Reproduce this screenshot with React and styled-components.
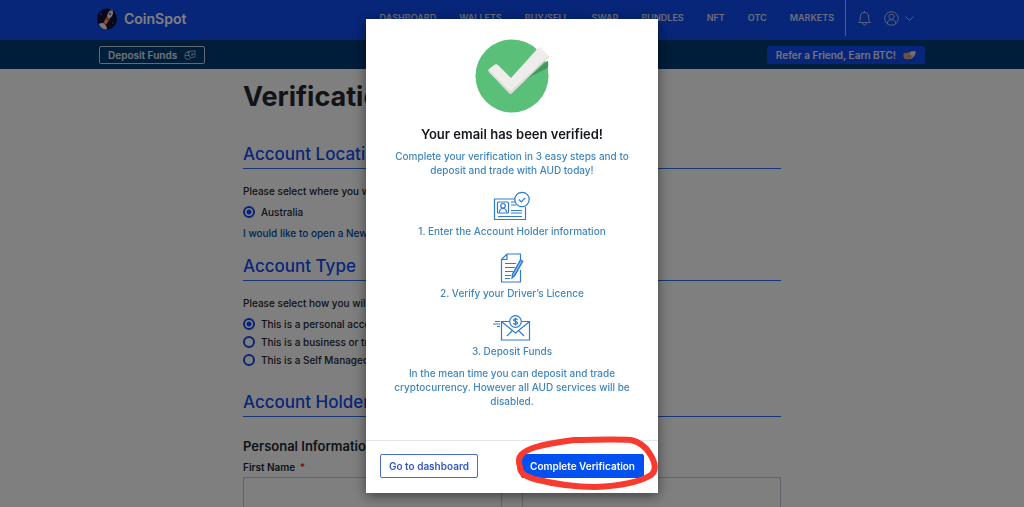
import React, { useState } from 'react';
import styled, { createGlobalStyle } from 'styled-components';

const colors = {
	blue: '#104cf2',
	navy: '#003a72',
	text: '#22262e',
	info: '#3f86bd',
	line: '#2e6ff0',
	icon: '#2e7bd0',
	marker: '#f93a2f'
};

const navItems = ['DASHBOARD', 'WALLETS', 'BUY/SELL', 'SWAP', 'BUNDLES', 'NFT', 'OTC', 'MARKETS'];

const accountTypes = [
	'This is a personal account',
	'This is a business or trust',
	'This is a Self Managed Fund'
];

export default function App() {
	const [accountType, setAccountType] = useState(accountTypes[0]);

	return (
		<>
			<GlobalStyle />
			<Page>
				<Header>
					<Brand href="#home">
						<RocketLogo />
						CoinSpot
					</Brand>
					<Nav>
						{navItems.map((item) => (
							<NavLink key={item} href={`#${item.toLowerCase()}`}>
								{item}
							</NavLink>
						))}
					</Nav>
					<HeaderTools>
						<IconButton aria-label="Notifications">
							<BellIcon />
						</IconButton>
						<IconButton aria-label="Account menu">
							<UserIcon />
						</IconButton>
					</HeaderTools>
				</Header>
				<SubBar>
					<BarButton>
						Deposit Funds
						<CashIcon />
					</BarButton>
					<BarButton $filled>
						Refer a Friend, Earn BTC!
						<HandsIcon />
					</BarButton>
				</SubBar>
				<Content>
					<Title>Verification</Title>

					<Section>
						<SectionTitle>Account Location</SectionTitle>
						<Prompt>Please select where you will live</Prompt>
						<RadioRow>
							<Radio type="radio" name="location" defaultChecked />
							Australia
						</RadioRow>
						<TextLink href="#new-account">I would like to open a New account</TextLink>
					</Section>

					<Section>
						<SectionTitle>Account Type</SectionTitle>
						<Prompt>Please select how you will trade</Prompt>
						<RadioGroup>
							{accountTypes.map((type) => (
								<RadioRow key={type}>
									<Radio
										type="radio"
										name="type"
										checked={accountType === type}
										onChange={() => setAccountType(type)}
									/>
									{type}
								</RadioRow>
							))}
						</RadioGroup>
					</Section>

					<Section>
						<SectionTitle>Account Holder</SectionTitle>
						<GroupTitle>Personal Information</GroupTitle>
						<Fields>
							<Field>
								<span>
									First Name <Required>*</Required>
								</span>
								<TextInput type="text" />
							</Field>
							<Field>
								<TextInput type="text" aria-label="Last Name" />
							</Field>
						</Fields>
					</Section>
				</Content>
			</Page>

			<Backdrop>
				<Modal role="dialog" aria-modal="true" aria-labelledby="modal-title">
					<ModalBody>
						<VerifiedIcon />
						<ModalTitle id="modal-title">Your email has been verified!</ModalTitle>
						<ModalText>
							Complete your verification in 3 easy steps and to deposit and trade with AUD today!
						</ModalText>
						<Steps>
							<Step>
								<IdCardIcon />
								1. Enter the Account Holder information
							</Step>
							<Step>
								<DocumentIcon />
								2. Verify your Driver’s Licence
							</Step>
							<Step>
								<EnvelopeIcon />
								3. Deposit Funds
							</Step>
						</Steps>
						<ModalText>
							In the mean time you can deposit and trade cryptocurrency. However all AUD services
							will be disabled.
						</ModalText>
					</ModalBody>
					<ModalFooter>
						<ModalButton>Go to dashboard</ModalButton>
						<Highlight>
							<ModalButton $primary>Complete Verification</ModalButton>
							<MarkerRing />
						</Highlight>
					</ModalFooter>
				</Modal>
			</Backdrop>
		</>
	);
}

function RocketLogo() {
	return (
		<svg width="20" height="22" viewBox="0 0 20 22" aria-hidden="true">
			<ellipse cx="10" cy="11" rx="10" ry="10.5" fill="#10103a" />
			<path d="M2 16c3-2 7-1 8 5-3 1-7-1-8-5Z" fill="#f4eee0" />
			<path d="m6 15 4-7 3 3-4 6Z" fill="#e8542a" />
			<path d="m7 15 2-4 2 2-2 3Z" fill="#ffb46a" />
			<path d="M10 8c1-4 3-6 5-7 2 4 1 7-3 10Z" fill="#f7f1ec" />
			<path d="M13 2.500c1-1 1.500-1.500 2-1.500.7 1 .8 2 1 3Z" fill="#e2462e" />
			<circle cx="13" cy="6" r="1.2" fill="#5a6f9d" />
			<circle cx="4" cy="6" r=".6" fill="#fff" />
			<circle cx="15.5" cy="15" r=".6" fill="#e05a4a" />
		</svg>
	);
}

function BellIcon() {
	return (
		<svg width="13" height="15" viewBox="0 0 13 15" fill="none" stroke="currentColor" aria-hidden="true">
			<path d="M.7 11.5c1.3-1 1.6-2 1.6-5.5C2.3 3 4 1.4 6.500 1.4S10.700 3 10.700 6c0 3.5.3 4.500 1.600 5.500Z" />
			<path d="M4.700 12c.3 2.600 3.300 2.600 3.600 0M6.500 0v1.400" />
		</svg>
	);
}

function UserIcon() {
	return (
		<svg width="30" height="15" viewBox="0 0 30 15" fill="none" stroke="currentColor" aria-hidden="true">
			<circle cx="7.5" cy="7.5" r="6.8" />
			<circle cx="7.5" cy="5.8" r="2.6" />
			<path d="M3.300 12.600c0-2.600 1.700-3.800 4.200-3.800s4.200 1.200 4.200 3.800" />
			<path d="m21.500 5.500 4 4 4-4" />
		</svg>
	);
}

function CashIcon() {
	return (
		<svg width="12" height="10" viewBox="0 0 12 10" fill="none" stroke="#a9b8c9" aria-hidden="true">
			<path d="M6 2.500C4 2 1 2.500 1 4.500v3c0 2 3 2 5 1.500M1 5.500h4" />
			<path d="M3.500 1.500 11 .8v6L6.500 8ZM8 3v3M9 3v2" />
		</svg>
	);
}

function HandsIcon() {
	return (
		<svg width="13" height="10" viewBox="0 0 13 10" aria-hidden="true">
			<path d="M5 4 8 1.500c1-1 2 0 2 0 2-1 3 0 2.500 2C12 6 10 7 8 9L5 8Z" fill="#eed9cf" />
			<path d="M.5 4c1-2 2-1 3-.5l1-1c2-.5 3 .5 2 2l2 1c1 1 0 2-1 3C5 10 1 9.500.5 7Z" fill="#dca27c" />
			<path d="m5 7 2-2m-1 3.500 2-2" stroke="#a96d52" strokeWidth=".6" />
		</svg>
	);
}

function VerifiedIcon() {
	return (
		<svg width="74" height="74" viewBox="0 0 74 74" aria-hidden="true">
			<circle cx="37" cy="37" r="36.5" fill="#5abf78" />
			<path d="m52 40 20.800-18.500c.6 3 .5 5 .2 7.500-7 3-13 6-21 11Z" fill="#47965f" />
			<path
				d="M14 33c-1-1-1-2 0-3l5-4c2-1 3-1 5 1l12 12 27-30c1-1 2-1 3 0l7 7c1 1 1 2 0 3L37 54c-1 1-2 1-3 0Z"
				fill="#efedeb"
			/>
			<path d="M14 33 34 54c1 1 2 1 3 0l36-35c1-1 1-1 .6-2L37 51c-1 1-2 1-3 0L14 31Z" fill="#dcdad8" />
		</svg>
	);
}

function IdCardIcon() {
	return (
		<StepIcon width="38" height="30" viewBox="0 0 38 30" aria-hidden="true">
			<path d="M22 8H1.500v20.500h31V16" />
			<rect x="4.500" y="11" width="11" height="11" rx="1" />
			<circle cx="10" cy="14.800" r="2.300" />
			<path d="M6.500 21.500c0-3 1.500-4 3.500-4s3.500 1 3.500 4M18 11h4M18 14h5M18 19.500h11M18 22h11M5 25.500h24" />
			<circle cx="29" cy="8.500" r="7.200" fill="#fff" />
			<path d="m26 8.500 2.300 2.300 4-4" />
		</StepIcon>
	);
}

function DocumentIcon() {
	return (
		<StepIcon width="24" height="30" viewBox="0 0 24 30" aria-hidden="true">
			<path d="M20.500 7V1H7L1.500 6.500V29h19V17M7 1v5.500H1.500" />
			<path d="M5 10.500h11M5 14.500h10M5 18.500h8M5 22.500h6M5 25.500h5" />
			<path d="m20.500 7 2.200 1.300-8 14.200-2.500 2.300.3-3.600Z" fill="#8db8e8" strokeWidth="1.400" />
		</StepIcon>
	);
}

function EnvelopeIcon() {
	return (
		<StepIcon width="38" height="26" viewBox="0 0 38 26" aria-hidden="true">
			<path d="M8.500 6.500h28V25h-28ZM9 7l13.500 11L36 7M14 21l5-5M31 21l-5-5" />
			<path d="M2 6.500h5M0 9h7M4 11.500h3" />
			<circle cx="22.500" cy="6.500" r="5.800" fill="#fff" />
			<path d="M24.500 4.800c-.5-1.500-4-1.300-4 .4 0 1.600 4 .9 4 2.700 0 1.700-3.500 1.800-4.200.2M22.500 2.800v7.600" />
		</StepIcon>
	);
}

function MarkerRing() {
	return (
		<Ring viewBox="0 0 144 54" aria-hidden="true">
			<path d="M6 30C2 19 9 14 22 10 32 7 45 5 60 3c19 0 38-1 57 0 9 2 15 7 19 14 5 8 7 16 1 21-11 7-33 11-56 12-20 0-41-3-61-8C12 39 6 37 6 30Z" />
		</Ring>
	);
}

const GlobalStyle = createGlobalStyle`
	* {
		box-sizing: border-box;
	}

	body {
		margin: 0;
		overflow: hidden;
		background: #fff;
		color: ${colors.text};
		font-family: Inter, 'Liberation Sans', sans-serif;
		font-size: 10px;
		font-weight: 500;
	}

	button, input {
		font: inherit;
	}
`;

const Page = styled.div`
	height: 100vh;
	overflow: hidden;
`;

const Header = styled.header`
	display: flex;
	height: 40px;
	padding: 0 110px 0 97px;
	background: ${colors.blue};
	color: #fff;
`;

const Brand = styled.a`
	display: flex;
	align-items: center;
	gap: 7px;
	padding-bottom: 3px;
	color: inherit;
	font-size: 14px;
	font-weight: 600;
	text-decoration: none;
`;

const Nav = styled.nav`
	display: flex;
	flex: 1;
	align-items: center;
	justify-content: flex-end;
	gap: 23px;
	padding: 0 11px 6px 0;
`;

const NavLink = styled.a`
	color: #d5dcf5;
	font-size: 9px;
	font-weight: 600;
	text-decoration: none;
`;

const HeaderTools = styled.div`
	display: flex;
	align-items: center;
	gap: 13px;
	height: 36px;
	padding-left: 12px;
	border-left: 1px solid #a6baf7;
`;

const IconButton = styled.button`
	display: flex;
	padding: 0;
	border: 0;
	background: none;
	color: #b4c4f5;
`;

const SubBar = styled.div`
	display: flex;
	align-items: center;
	justify-content: space-between;
	height: 29px;
	padding: 0 99px;
	background: ${colors.navy};
`;

const BarButton = styled.button`
	display: flex;
	align-items: center;
	gap: 7px;
	height: 18px;
	padding: 0 8px;
	border: 1px solid ${({ $filled }) => ($filled ? colors.blue : '#c8d4e4')};
	border-radius: 2px;
	background: ${({ $filled }) => ($filled ? colors.blue : 'none')};
	color: #e2e8f2;
	font-weight: 600;
`;

const Content = styled.main`
	width: 538px;
	margin: 0 auto;
	padding-top: 11px;
`;

const Title = styled.h1`
	margin: 0 0 29px;
	font-size: 27px;
	line-height: 34px;
	font-weight: 700;
`;

const Section = styled.section`
	margin-bottom: 14px;
`;

const SectionTitle = styled.h2`
	margin: 0 0 14px;
	padding-bottom: 3px;
	border-bottom: 1px solid ${colors.line};
	color: ${colors.blue};
	font-size: 17px;
	line-height: 22px;
	font-weight: 500;
`;

const Prompt = styled.p`
	margin: 0 0 4px;
	line-height: 16px;
`;

const RadioGroup = styled.div`
	padding-bottom: 8px;
`;

const RadioRow = styled.label`
	display: flex;
	align-items: center;
	gap: 6px;
	height: 18px;
`;

const Radio = styled.input`
	width: 12px;
	height: 12px;
	margin: 0;
	border: 2px solid ${colors.blue};
	border-radius: 50%;
	appearance: none;

	&:checked {
		background: radial-gradient(circle, ${colors.blue} 2px, transparent 3px);
	}
`;

const TextLink = styled.a`
	display: block;
	margin-top: 4px;
	color: #004aa8;
	line-height: 16px;
	text-decoration: none;
`;

const GroupTitle = styled.h3`
	margin: 20px 0 5px;
	font-size: 13px;
	line-height: 18px;
	font-weight: 600;
`;

const Fields = styled.div`
	display: grid;
	grid-template-columns: 1fr 1fr;
	align-items: end;
	gap: 20px;
`;

const Field = styled.label`
	display: flex;
	flex-direction: column;
	gap: 3px;
	font-weight: 600;
	line-height: 14px;
`;

const Required = styled.span`
	margin-left: 2px;
	color: #e32525;
`;

const TextInput = styled.input`
	height: 38px;
	border: 1px solid #c5cbd8;
	background: none;
`;

const Backdrop = styled.div`
	position: fixed;
	inset: 0;
	display: flex;
	align-items: flex-start;
	justify-content: center;
	padding-top: 19px;
	background: rgba(0, 0, 0, 0.5);
`;

const Modal = styled.div`
	width: 292px;
	background: #fff;
	box-shadow: 0 3px 12px rgba(0, 0, 0, 0.5);
`;

const ModalBody = styled.div`
	display: flex;
	flex-direction: column;
	align-items: center;
	padding: 20px 24px 32px;
	text-align: center;
`;

const ModalTitle = styled.h2`
	margin: 12px 0 6px;
	color: #15181d;
	font-size: 13px;
	line-height: 18px;
	font-weight: 600;
`;

const ModalText = styled.p`
	margin: 0;
	color: ${colors.info};
	line-height: 14px;
`;

const Steps = styled.ol`
	display: flex;
	flex-direction: column;
	gap: 15px;
	margin: 14px 0 8px;
	padding: 0;
	list-style: none;
`;

const Step = styled.li`
	display: flex;
	flex-direction: column;
	align-items: center;
	gap: 3px;
	color: ${colors.info};
	line-height: 14px;
`;

const StepIcon = styled.svg`
	fill: none;
	stroke: ${colors.icon};
	stroke-width: 1.2;
`;

const ModalFooter = styled.div`
	display: flex;
	justify-content: space-between;
	padding: 13px 14px 15px;
	border-top: 1px solid #e4e6ea;
`;

const ModalButton = styled.button`
	height: 24px;
	padding: 0 8px;
	border: 1px solid ${({ $primary }) => ($primary ? '#0350f0' : '#4a6bd0')};
	border-radius: 2px;
	background: ${({ $primary }) => ($primary ? '#0350f0' : '#fff')};
	color: ${({ $primary }) => ($primary ? '#fff' : '#3557c4')};
	font-weight: 600;
`;

const Highlight = styled.div`
	position: relative;
`;

const Ring = styled.svg`
	position: absolute;
	top: -17px;
	right: -14px;
	width: 144px;
	height: 54px;
	overflow: visible;
	fill: none;
	stroke: ${colors.marker};
	stroke-width: 6;
	pointer-events: none;
`;
